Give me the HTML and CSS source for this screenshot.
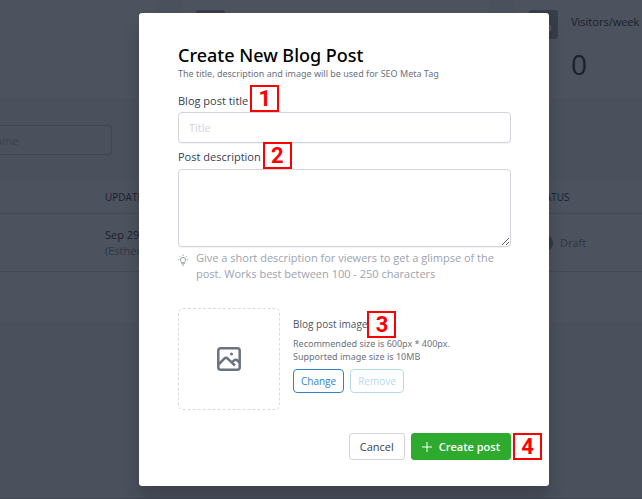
FILE: index.html
```html
<!DOCTYPE html>
<html lang="en">
<head>
<meta charset="utf-8">
<title>Create New Blog Post</title>
<link rel="stylesheet" href="styles.css">
</head>
<body>
<main class="page">
  <section class="stats">
    <div class="stat"></div>
    <div class="stat"><span class="stat-icon"></span></div>
    <div class="stat">
      <span class="stat-icon"><svg viewBox="0 0 24 24" width="16" height="16"><circle cx="7" cy="7" r="4"/><circle cx="18" cy="17" r="4"/></svg></span>
      <div class="stat-text">
        <div class="stat-label">Visitors/week</div>
        <div class="stat-value">0</div>
      </div>
    </div>
  </section>
  <div class="search"><input class="search-input" type="text" placeholder="name" aria-label="Search by name"></div>
  <div class="posts-card">
    <table class="posts">
      <thead>
        <tr><th class="col-name"></th><th class="col-updated">UPDATED</th><th>STATUS</th></tr>
      </thead>
      <tbody>
        <tr>
          <td></td>
          <td>Sep 29<div class="author">(Esther)</div></td>
          <td><span class="status"><span class="dot"></span>Draft</span></td>
        </tr>
      </tbody>
    </table>
  </div>
</main>

<div class="overlay">
  <form class="dialog" role="dialog" aria-labelledby="dialog-title">
    <h1 class="title" id="dialog-title">Create New Blog Post</h1>
    <p class="subtitle">The title, description and image will be used for SEO Meta Tag</p>

    <div class="label-row"><label for="post-title">Blog post title</label><span class="step">1</span></div>
    <input class="field" id="post-title" type="text" placeholder="Title">

    <div class="label-row"><label for="post-desc">Post description</label><span class="step">2</span></div>
    <textarea class="field area" id="post-desc"></textarea>

    <div class="hint">
      <svg class="bulb" viewBox="0 0 10 12" width="10" height="12"><path d="M3.8 8.3C2.9 7.7 2.4 7 2.4 6a2.6 2.6 0 0 1 5.2 0c0 1-.5 1.700-1.400 2.300V10H3.800zM3.800 8.700h2.400M5 0.500v1.500M0.300 5.500h1M8.700 5.500h1M1.300 1.900l.9.900M8.700 1.900l-.9.900M4.300 11.200h1.400"/></svg>
      <p class="hint-text">Give a short description for viewers to get a glimpse of the post. Works best between 100 - 250 characters</p>
    </div>

    <div class="image-row">
      <div class="preview">
        <svg viewBox="0 0 24 24" width="24" height="24"><rect x="1.300" y="1.300" width="21.400" height="21.400" rx="2.500"/><path d="M1.500 17.500 7.300 11.600Q9 10 10.700 11.600L18 18.500M15 15.500l1.700-1.800Q18.800 11.800 20.500 13.500l2 2"/><circle class="sun" cx="14.500" cy="7" r="1.500"/></svg>
      </div>
      <div class="image-info">
        <div class="image-title">Blog post image<span class="step">3</span></div>
        <p class="image-help">Recommended size is 600px * 400px.<br>Supported image size is 10MB</p>
        <div class="image-actions">
          <button class="small" type="button">Change</button>
          <button class="small" type="button" disabled>Remove</button>
        </div>
      </div>
    </div>

    <div class="footer">
      <button class="btn" type="button">Cancel</button>
      <button class="btn primary" type="submit"><svg viewBox="0 0 10 10" width="10" height="10"><path d="M5 0v10M0 5h10"/></svg>Create post</button>
      <span class="step">4</span>
    </div>
  </form>
</div>
</body>
</html>
```

FILE: styles.css
```css
* { box-sizing: border-box; }
body {
  margin: 0;
  background: #4a505c;
  color: #1b212d;
  font-family: "Open Sans", "Noto Sans", sans-serif;
  font-size: 11px;
  line-height: 16px;
}
h1, p { margin: 0; }
button, input, textarea { font: inherit; }

.page { height: 100vh; overflow: hidden; border-bottom: 1px solid #434955; }
.stats { display: grid; grid-template-columns: 156px 307px 1fr; gap: 26px; }
.stat {
  display: flex;
  gap: 13px;
  min-height: 98px;
  padding: 10px 0 0 14px;
  background: #4c525e;
  white-space: nowrap;
}
.stat-icon {
  display: flex;
  flex: none;
  align-items: center;
  justify-content: center;
  width: 29px;
  height: 29px;
  border-radius: 3px;
  background: #373d49;
}
.stat-icon svg { fill: none; stroke: #555b67; stroke-width: 2; }
.stat-label { padding-top: 4px; }
.stat-value { padding-top: 16px; font-size: 28px; line-height: 36px; }
.search { padding-top: 27px; }
.search-input {
  display: block;
  width: 112px;
  height: 30px;
  padding: 0;
  border: 1px solid #404652;
  border-left: 0;
  border-radius: 0 3px 3px 0;
  background: transparent;
  text-indent: -11px;
}
.search-input::placeholder { color: #3b414d; opacity: 1; }
.posts-card { margin-top: 25px; padding-bottom: 50px; background: #4c525e; }
.posts { width: 100%; border-spacing: 0; table-layout: fixed; }
.posts th { height: 34px; padding: 0; font-size: 10px; font-weight: 500; text-align: left; border-bottom: 1px solid #434955; }
.posts td { height: 58px; padding: 0; border-bottom: 1px solid #434955; }
.col-name { width: 105px; }
.col-updated { width: 429px; }
.author { color: #303642; }
.status { display: flex; align-items: center; gap: 7px; padding-left: 3px; color: #303642; }
.dot { width: 16px; height: 16px; border-radius: 50%; background: #303945; }

.overlay { position: absolute; inset: 0; padding: 13px 93px 13px 139px; }
.dialog {
  padding: 30px 38px 26px 39px;
  border-radius: 3px;
  background: #fff;
  box-shadow: 0 12px 16px rgba(0, 0, 0, .18);
  color: #374151;
}
.title { color: #000; font-family: "Noto Sans", sans-serif; font-size: 18px; font-weight: 500; line-height: 25px; }
.subtitle { color: #6b7280; font-family: "Noto Sans", sans-serif; font-size: 9px; line-height: 12px; }
.label-row { position: relative; width: fit-content; padding: 6px 0 4px; }
.subtitle + .label-row { padding: 13px 0 3px; }
.step {
  position: absolute;
  bottom: 0;
  left: 100%;
  width: 29px;
  height: 27px;
  margin-left: 2px;
  border: 2px solid #f00;
  color: #f00;
  font: bold 22px/24px Roboto, "Liberation Sans", sans-serif;
  text-align: center;
}
.field {
  display: block;
  width: 100%;
  height: 31px;
  padding: 0 10px;
  border: 1px solid #d1d5db;
  border-radius: 4px;
  background: #fff;
  box-shadow: 0 1px 1px rgba(0, 0, 0, .05);
}
.field::placeholder { color: #d1d5db; opacity: 1; }
.area { height: 78px; resize: vertical; }
.hint { display: flex; gap: 8px; padding-top: 3px; color: #9ca3af; }
.bulb { flex: none; margin-top: 4px; fill: none; stroke: #9ca3af; }
.image-row { display: flex; gap: 13px; padding-top: 26px; }
.preview {
  display: flex;
  flex: none;
  align-items: center;
  justify-content: center;
  width: 102px;
  height: 102px;
  border: 1px dashed #d9dbdf;
  border-radius: 5px;
}
.preview svg { fill: none; stroke: #6b7280; stroke-width: 2.5; }
.preview .sun { fill: #6b7280; stroke: none; }
.image-info { padding-top: 8px; color: #6b7280; }
.image-title { position: relative; width: fit-content; margin-bottom: 5px; color: #4b5563; font-size: 10px; }
.image-title .step { bottom: -6px; margin-left: 0; }
.image-help { font-family: "Noto Sans", sans-serif; font-size: 9px; line-height: 13px; }
.image-actions { display: flex; gap: 6px; padding-top: 6px; }
.small {
  height: 24px;
  padding: 0 7px;
  border: 1px solid #3182ce;
  border-radius: 4px;
  background: #fff;
  color: #3182ce;
  font-size: 10px;
  font-weight: 500;
}
.small:disabled { border-color: #b5daee; color: #b5daee; }
.footer { position: relative; display: flex; justify-content: flex-end; gap: 6px; padding-top: 23px; }
.btn {
  display: flex;
  align-items: center;
  gap: 7px;
  height: 27px;
  padding: 0 10px;
  border: 1px solid #d1d5db;
  border-radius: 3px;
  background: #fff;
  color: #374151;
}
.primary { border-color: #2eab2e; background: #2eab2e; color: #fff; font-weight: 600; }
.primary svg { stroke: #fff; }
```
